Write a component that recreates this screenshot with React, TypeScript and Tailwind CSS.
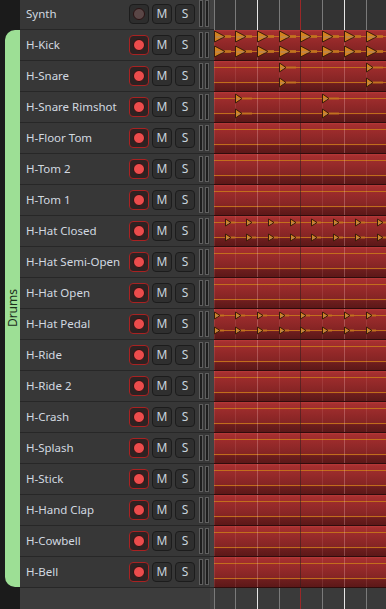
import React from "react";

type Size = "lg" | "md" | "sm";

interface Track {
  name: string;
  notes?: number[];
  size?: Size;
}

// beat lines inside the pattern area (px from its left edge)
const beats = [0, 21, 43, 65, 86, 108, 130, 152];
const bars = [43, 130];
const playhead = 86;
const offbeats = beats.map((b) => b + 11);

const tracks: Track[] = [
  { name: "H-Kick", notes: beats, size: "lg" },
  { name: "H-Snare", notes: [65, 152], size: "md" },
  { name: "H-Snare Rimshot", notes: [21, 108], size: "md" },
  { name: "H-Floor Tom" },
  { name: "H-Tom 2" },
  { name: "H-Tom 1" },
  { name: "H-Hat Closed", notes: offbeats, size: "sm" },
  { name: "H-Hat Semi-Open" },
  { name: "H-Hat Open" },
  { name: "H-Hat Pedal", notes: beats, size: "sm" },
  { name: "H-Ride" },
  { name: "H-Ride 2" },
  { name: "H-Crash" },
  { name: "H-Splash" },
  { name: "H-Stick" },
  { name: "H-Hand Clap" },
  { name: "H-Cowbell" },
  { name: "H-Bell" },
];

const noteDims: Record<Size, { w: number; h: number; tail: number; th: number }> = {
  lg: { w: 11, h: 11, tail: 8, th: 3 },
  md: { w: 7, h: 9, tail: 12, th: 2 },
  sm: { w: 6, h: 7, tail: 6, th: 2 },
};

const Note: React.FC<{ x: number; y: number; size: Size }> = ({ x, y, size }) => {
  const d = noteDims[size];
  return (
    <g>
      <rect x={x + d.w - 2} y={y - d.th / 2} width={d.tail} height={d.th} fill="#c2741e" opacity={0.85} />
      <polygon
        points={`${x + 0.5},${y - d.h / 2} ${x + d.w},${y} ${x + 0.5},${y + d.h / 2}`}
        fill="#d4821e"
        stroke="#3a1c0a"
        strokeWidth={1}
      />
      <line x1={x + 1.5} y1={y + 0.5} x2={x + d.w - 2} y2={y + 0.5} stroke="#8f8ca0" strokeWidth={1} opacity={0.6} />
    </g>
  );
};

const GridLines: React.FC<{ height: number; red?: boolean }> = ({ height, red }) => (
  <>
    {beats.map((b) => {
      const isBar = bars.includes(b);
      const isHead = b === playhead;
      const stroke = red
        ? isHead
          ? "rgba(50,30,30,0.55)"
          : isBar
            ? "rgba(255,200,200,0.28)"
            : "rgba(255,190,190,0.12)"
        : isHead
          ? "#9a2828"
          : isBar
            ? "#e6e6e6"
            : "#7a7a7a";
      return <line key={b} x1={b + 0.5} y1={0} x2={b + 0.5} y2={height} stroke={stroke} strokeWidth={1} />;
    })}
  </>
);

const RedRoll: React.FC<{ notes?: number[]; size?: Size }> = ({ notes = [], size = "sm" }) => (
  <svg width={172} height={31} className="block">
    <defs>
      <linearGradient id="redrow" x1="0" y1="0" x2="0" y2="1">
        <stop offset="0" stopColor="#b83a3a" />
        <stop offset="0.06" stopColor="#a62f2f" />
        <stop offset="0.7" stopColor="#842424" />
        <stop offset="0.78" stopColor="#6c1d1d" />
        <stop offset="1" stopColor="#5c1818" />
      </linearGradient>
    </defs>
    <rect x={0} y={0} width={172} height={30} fill="url(#redrow)" />
    <line x1={0} y1={30.5} x2={172} y2={30.5} stroke="#300c0c" />
    <line x1={0} y1={6.5} x2={172} y2={6.5} stroke="#c8761c" opacity={0.9} />
    <line x1={0} y1={21.5} x2={172} y2={21.5} stroke="#c8761c" opacity={0.9} />
    <GridLines height={30} red />
    {notes.map((n) => (
      <React.Fragment key={n}>
        <Note x={n} y={6.5} size={size} />
        <Note x={n} y={21.5} size={size} />
      </React.Fragment>
    ))}
  </svg>
);

const GrayRoll: React.FC<{ height: number; bg: string }> = ({ height, bg }) => (
  <svg width={172} height={height} className="block">
    <rect x={0} y={0} width={172} height={height} fill={bg} />
    <GridLines height={height} />
  </svg>
);

const RecordButton: React.FC<{ active: boolean }> = ({ active }) => (
  <div
    className={`flex h-[20px] w-[20px] items-center justify-center rounded-[4px] border ${
      active ? "border-[#a82222] bg-[#2e2222]" : "border-[#1c1c1c] bg-[#2d2d2d]"
    }`}
  >
    <div
      className={`h-[12px] w-[12px] rounded-full border border-[#2a1212] ${
        active ? "bg-[#ec4c4c]" : "bg-[#5a4646]"
      }`}
    />
  </div>
);

const ToggleButton: React.FC<{ label: string }> = ({ label }) => (
  <div className="flex h-[20px] w-[20px] items-center justify-center rounded-[4px] border border-[#1c1c1c] bg-[#2f2f2f] text-[12px] leading-none text-[#c9d3dd]">
    {label}
  </div>
);

const TrackHeader: React.FC<{ name: string; active: boolean }> = ({ name, active }) => (
  <div className="flex h-full w-[190px] items-center border-b border-[#272727] bg-[#373737] pl-[6px] pr-[1px]">
    <span className="flex-1 truncate text-[11.5px] text-[#d2d9e0]">{name}</span>
    <div className="flex items-center gap-[3px]">
      <RecordButton active={active} />
      <ToggleButton label="M" />
      <ToggleButton label="S" />
    </div>
    <div className="ml-[4px] flex h-full items-center gap-[2px] py-[2px]">
      <div className="h-full w-[4px] border border-[#5e5e5e] bg-[#1e1e1e]" />
      <div className="h-full w-[4px] border border-[#5e5e5e] bg-[#1e1e1e]" />
    </div>
  </div>
);

const App: React.FC = () => {
  return (
    <div
      className="flex h-[609px] w-[386px] flex-col overflow-hidden bg-[#1b1b1b]"
      style={{ fontFamily: '"Noto Sans", "Open Sans", sans-serif' }}
    >
      {/* Synth track, scrolled partly off the top */}
      <div className="h-[30px] shrink-0 overflow-hidden">
        <div className="-mt-[2px] flex h-[32px]">
          <div className="w-[20px] shrink-0" />
          <TrackHeader name="Synth" active={false} />
          <div className="w-[4px] border-b border-[#272727] bg-[#424242]" />
          <GrayRoll height={32} bg="#333333" />
        </div>
      </div>

      {/* Drums group */}
      <div className="flex shrink-0">
        <div className="flex w-[20px] shrink-0 justify-end pb-[1px]">
          <div className="flex w-[15px] items-center justify-center rounded-l-[10px] bg-[#9ddf95]">
            <span className="rotate-180 text-[12px] leading-none text-[#1c2e1c] [writing-mode:vertical-rl]">
              Drums
            </span>
          </div>
        </div>
        <div className="flex flex-col">
          {tracks.map((t) => (
            <div key={t.name} className="flex h-[31px]">
              <TrackHeader name={t.name} active />
              <div className="w-[4px] border-b border-[#272727] bg-[#424242]" />
              <RedRoll notes={t.notes} size={t.size} />
            </div>
          ))}
        </div>
      </div>

      {/* empty space below the last track */}
      <div className="flex flex-1">
        <div className="w-[20px] shrink-0" />
        <div className="w-[190px] bg-[#3c3c3c]" />
        <div className="w-[4px] bg-[#424242]" />
        <GrayRoll height={30} bg="#3a3a3a" />
      </div>
    </div>
  );
};

export default App;
